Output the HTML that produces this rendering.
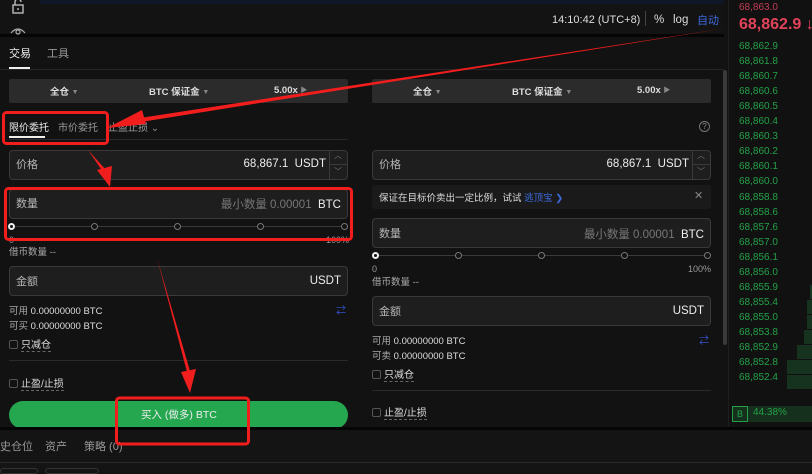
<!DOCTYPE html>
<html><head><meta charset="utf-8"><style>
*{margin:0;padding:0;box-sizing:border-box}
body{width:812px;height:472px;overflow:hidden;background:#121212;font-family:"Liberation Sans","Noto Sans CJK SC",sans-serif;color:#e6e6e6;position:relative;font-size:10px}
.a{position:absolute;white-space:nowrap}
.inp{position:absolute;background:#1e1e1e;border:1px solid #3a3a3a;border-radius:4px}
.lab{color:#b5b5b5;font-size:11px}
.sel{position:absolute;background:#2b2b2b;border-radius:2px;height:24px;top:79px}
.sel span{position:absolute;top:2px;line-height:24px;font-size:9.5px;font-weight:bold;color:#ddd}
.tri{color:#888;font-size:7px;font-style:normal;vertical-align:1px}
.g{color:#24a148;font-size:10px;left:739px}
.dot{position:absolute;width:7px;height:7px;border:1px solid #777;border-radius:50%;background:#121212}
.line{position:absolute;height:1px;background:#333}
.cb{display:inline-block;width:9px;height:9px;border:1px solid #555;border-radius:2px;vertical-align:-1px;margin-right:3px}
.u{border-bottom:1px dashed #666}
.bar{position:absolute;background:#16331f;height:14px;right:0}
.r{text-align:right}
</style></head><body>
<div class="a" style="left:0;top:0;width:724px;height:35px;background:#131313"></div>
<div class="a" style="left:40px;top:0;width:684px;height:4px;background:#101827"></div>
<div class="a" style="left:0;top:34px;width:724px;height:3px;background:#050505"></div>
<svg class="a" style="left:10px;top:0" width="20" height="36"><rect x="3" y="5" width="10" height="8" fill="none" stroke="#bbb" stroke-width="1.4"/><path d="M5 5 V2 a3 3 0 0 1 6 0" fill="none" stroke="#bbb" stroke-width="1.4"/><rect x="7.3" y="8" width="1.4" height="2" fill="#bbb"/><path d="M1 33 Q8 25 15 33" fill="none" stroke="#aaa" stroke-width="1.3"/><circle cx="8" cy="32" r="2" fill="none" stroke="#aaa" stroke-width="1.2"/></svg>
<div class="a" style="left:552px;top:14px;font-size:11px;color:#ddd">14:10:42 (UTC+8)</div>
<div class="a" style="left:645px;top:11px;width:1px;height:15px;background:#444"></div>
<div class="a" style="left:654px;top:14px;font-size:11.5px;color:#ddd">%</div>
<div class="a" style="left:673px;top:14px;font-size:11.5px;color:#ddd">log</div>
<div class="a" style="left:697px;top:12px;font-size:11px;color:#3d6be0">自动</div>
<div class="a" style="left:9px;top:45px;font-size:11px;color:#eee">交易</div>
<div class="a" style="left:47px;top:45px;font-size:11px;color:#999">工具</div>
<div class="a" style="left:9px;top:67px;width:21px;height:2px;background:#eee"></div>
<div class="line" style="left:0;top:69px;width:724px;background:#262626"></div>
<div class="sel" style="left:9px;width:339px"><span style="left:41px">全仓 <i class="tri">▼</i></span><span style="left:140px">BTC 保证金 <i class="tri">▼</i></span><span style="left:265px;top:0">5.00x <i class="tri">▶</i></span></div>
<div class="sel" style="left:372px;width:339px"><span style="left:41px">全仓 <i class="tri">▼</i></span><span style="left:140px">BTC 保证金 <i class="tri">▼</i></span><span style="left:265px;top:0">5.00x <i class="tri">▶</i></span></div>
<div class="a" style="left:9px;top:119px;font-size:10px;color:#eee">限价委托</div>
<div class="a" style="left:58px;top:119px;font-size:10px;color:#999">市价委托</div>
<div class="a" style="left:108px;top:119px;font-size:10px;color:#999">止盈止损 <span style="color:#888">⌄</span></div>
<div class="a" style="left:9px;top:136px;width:36px;height:2px;background:#eee"></div>
<div class="line" style="left:9px;top:139px;width:339px;background:#2a2a2a"></div>
<div class="a" style="left:699px;top:121px;width:11px;height:11px;border:1px solid #777;border-radius:50%;font-size:8px;color:#888;text-align:center;line-height:9px">?</div>
<!-- LEFT -->
<div class="inp" style="left:9px;top:150px;width:339px;height:30px"></div>
<div class="a lab" style="left:16px;top:156px">价格</div>
<div class="a r" style="right:486px;top:158px;font-size:11.5px;color:#eee">68,867.1&nbsp; USDT</div>
<div class="a" style="left:329px;top:150px;width:1px;height:30px;background:#3a3a3a"></div>
<div class="a" style="left:330px;top:164px;width:18px;height:1px;background:#3a3a3a"></div>
<div class="a" style="left:334px;top:150px;font-size:8px;color:#777">︿</div>
<div class="a" style="left:334px;top:166px;font-size:8px;color:#777">﹀</div>
<div class="inp" style="left:9px;top:189px;width:339px;height:30px"></div>
<div class="a lab" style="left:16px;top:195px">数量</div>
<div class="a r" style="right:471px;top:196px;font-size:11.5px;color:#777">最小数量 0.00001 <span style="color:#eee">&nbsp;BTC</span></div>
<div class="line" style="left:12px;top:226px;width:334px;background:#3a3a3a"></div>
<div class="dot" style="left:8px;top:223px;border:2px solid #eee"></div>
<div class="dot" style="left:91px;top:223px"></div><div class="dot" style="left:174px;top:223px"></div><div class="dot" style="left:257px;top:223px"></div><div class="dot" style="left:341px;top:223px"></div>
<div class="a" style="left:9px;top:235px;font-size:9px;color:#999">0</div>
<div class="a" style="left:326px;top:235px;font-size:9px;color:#999">100%</div>
<div class="a" style="left:9px;top:244px;font-size:9.5px;color:#aaa">借币数量 --</div>
<div class="inp" style="left:9px;top:266px;width:339px;height:30px"></div>
<div class="a lab" style="left:16px;top:273px">金额</div>
<div class="a r" style="right:471px;top:275px;font-size:11.5px;color:#eee">USDT</div>
<div class="a" style="left:9px;top:303px;font-size:9.5px;color:#aaa">可用 <span style="color:#ddd">0.00000000 BTC</span></div>
<div class="a" style="left:9px;top:318px;font-size:9.5px;color:#aaa">可买 <span style="color:#ddd">0.00000000 BTC</span></div>
<div class="a" style="left:336px;top:302px;color:#3553d0;font-size:10px">⇄</div>
<div class="a" style="left:9px;top:336px;font-size:10px;color:#ddd"><i class="cb"></i><span class="u">只减仓</span></div>
<div class="line" style="left:9px;top:360px;width:339px;background:#2a2a2a"></div>
<div class="a" style="left:9px;top:375px;font-size:10px;color:#ddd"><i class="cb"></i><span class="u">止盈/止损</span></div>
<div class="a" style="left:9px;top:401px;width:339px;height:28px;background:#25a750;border-radius:14px"></div>
<div class="a" style="left:141px;top:407px;font-size:10.5px;color:#eee">买入 (做多) BTC</div>
<!-- RIGHT -->
<div class="inp" style="left:372px;top:150px;width:339px;height:30px"></div>
<div class="a lab" style="left:379px;top:156px">价格</div>
<div class="a r" style="right:123px;top:158px;font-size:11.5px;color:#eee">68,867.1&nbsp; USDT</div>
<div class="a" style="left:692px;top:150px;width:1px;height:30px;background:#3a3a3a"></div>
<div class="a" style="left:693px;top:164px;width:18px;height:1px;background:#3a3a3a"></div>
<div class="a" style="left:697px;top:150px;font-size:8px;color:#777">︿</div>
<div class="a" style="left:697px;top:166px;font-size:8px;color:#777">﹀</div>
<div class="a" style="left:372px;top:185px;width:339px;height:24px;background:#1a1a1a;border-radius:3px"></div>
<div class="a" style="left:379px;top:190px;font-size:9.5px;color:#ddd">保证在目标价卖出一定比例，试试 <span style="color:#3d6be0">逃顶宝 ❯</span></div>
<div class="a" style="left:694px;top:189px;font-size:11px;color:#888">✕</div>
<div class="inp" style="left:372px;top:218px;width:339px;height:30px"></div>
<div class="a lab" style="left:379px;top:225px">数量</div>
<div class="a r" style="right:108px;top:226px;font-size:11.5px;color:#777">最小数量 0.00001 <span style="color:#eee">&nbsp;BTC</span></div>
<div class="line" style="left:375px;top:255px;width:334px;background:#3a3a3a"></div>
<div class="dot" style="left:372px;top:252px;border:2px solid #eee"></div>
<div class="dot" style="left:455px;top:252px"></div><div class="dot" style="left:538px;top:252px"></div><div class="dot" style="left:621px;top:252px"></div><div class="dot" style="left:704px;top:252px"></div>
<div class="a" style="left:372px;top:264px;font-size:9px;color:#999">0</div>
<div class="a" style="left:688px;top:264px;font-size:9px;color:#999">100%</div>
<div class="a" style="left:372px;top:274px;font-size:9.5px;color:#aaa">借币数量 --</div>
<div class="inp" style="left:372px;top:296px;width:339px;height:30px"></div>
<div class="a lab" style="left:379px;top:303px">金额</div>
<div class="a r" style="right:108px;top:305px;font-size:11.5px;color:#eee">USDT</div>
<div class="a" style="left:372px;top:333px;font-size:9.5px;color:#aaa">可用 <span style="color:#ddd">0.00000000 BTC</span></div>
<div class="a" style="left:372px;top:348px;font-size:9.5px;color:#aaa">可卖 <span style="color:#ddd">0.00000000 BTC</span></div>
<div class="a" style="left:699px;top:332px;color:#3553d0;font-size:10px">⇄</div>
<div class="a" style="left:372px;top:366px;font-size:10px;color:#ddd"><i class="cb"></i><span class="u">只减仓</span></div>
<div class="line" style="left:372px;top:390px;width:339px;background:#2a2a2a"></div>
<div class="a" style="left:372px;top:404px;font-size:10px;color:#ddd"><i class="cb"></i><span class="u">止盈/止损</span></div>
<div class="a" style="left:723px;top:70px;width:4px;height:275px;background:#3a3a3a;border-radius:2px"></div>
<!-- order book -->
<div class="a" style="left:728px;top:0;width:84px;height:428px;background:#111;border-left:1px solid #1e1e1e"></div>
<div class="a" style="left:739px;top:2px;font-size:10px;color:#c33d55">68,863.0</div>
<div class="a" style="left:739px;top:16px;font-size:16px;font-weight:bold;color:#e0435a">68,862.9 ↓</div>
<div class="bar" style="top:285px;width:2px"></div><div class="bar" style="top:300px;width:5px"></div><div class="bar" style="top:315px;width:5px"></div><div class="bar" style="top:330px;width:8px"></div><div class="bar" style="top:345px;width:15px"></div><div class="bar" style="top:360px;width:25px"></div><div class="bar" style="top:375px;width:25px"></div>
<div class="a g" style="top:41px">68,862.9</div><div class="a g" style="top:56px">68,861.8</div><div class="a g" style="top:71px">68,860.7</div><div class="a g" style="top:86px">68,860.6</div><div class="a g" style="top:101px">68,860.5</div><div class="a g" style="top:116px">68,860.4</div><div class="a g" style="top:131px">68,860.3</div><div class="a g" style="top:146px">68,860.2</div><div class="a g" style="top:161px">68,860.1</div><div class="a g" style="top:176px">68,860.0</div><div class="a g" style="top:192px">68,858.8</div><div class="a g" style="top:207px">68,858.6</div><div class="a g" style="top:222px">68,857.6</div><div class="a g" style="top:237px">68,857.0</div><div class="a g" style="top:252px">68,856.1</div><div class="a g" style="top:267px">68,856.0</div><div class="a g" style="top:282px">68,855.9</div><div class="a g" style="top:297px">68,855.4</div><div class="a g" style="top:312px">68,855.0</div><div class="a g" style="top:327px">68,853.8</div><div class="a g" style="top:342px">68,852.9</div><div class="a g" style="top:357px">68,852.8</div><div class="a g" style="top:372px">68,852.4</div>
<div class="a" style="left:732px;top:406px;width:80px;height:16px;background:#15301c"></div>
<div class="a" style="left:732px;top:406px;width:16px;height:16px;border:1px solid #24a148;color:#24a148;font-size:9px;text-align:center;line-height:14px">B</div>
<div class="a" style="left:753px;top:407px;font-size:10px;color:#24a148">44.38%</div>
<div class="a" style="left:0;top:427px;width:812px;height:3px;background:#050505"></div>
<div class="a" style="left:0;top:430px;width:812px;height:42px;background:#141414"></div>
<div class="a" style="left:0;top:438px;font-size:11px;color:#999">史仓位</div>
<div class="a" style="left:45px;top:438px;font-size:11px;color:#999">资产</div>
<div class="a" style="left:84px;top:438px;font-size:11px;color:#999">策略 (0)</div>
<div class="line" style="left:0;top:462px;width:812px;background:#2a2a2a"></div>
<div class="a" style="left:0;top:468px;width:38px;height:6px;border:1px solid #333;border-radius:3px"></div>
<div class="a" style="left:45px;top:468px;width:54px;height:6px;border:1px solid #333;border-radius:3px"></div>
<svg class="a" style="left:0;top:0" width="812" height="472">
<g fill="none" stroke="#f21d1d" stroke-width="3">
<rect x="3.5" y="112.5" width="104" height="31" rx="3"/>
<rect x="5.5" y="188.5" width="346" height="51" rx="3"/>
<rect x="116.5" y="398" width="132" height="46" rx="3"/>
</g>
<g fill="#f21d1d">
<path d="M727 28 L140 118 L141 122 Z"/>
<path d="M107 128 L142 110 L146 124 Z"/>
<path d="M88 150 L103 172 L106 170 Z"/>
<path d="M110 187 L97 170 L112 166 Z"/>
<path d="M157 258 L187 372 L190 371 Z"/>
<path d="M190 393 L181 372 L196 369 Z"/>
</g>
</svg>
</body></html>
